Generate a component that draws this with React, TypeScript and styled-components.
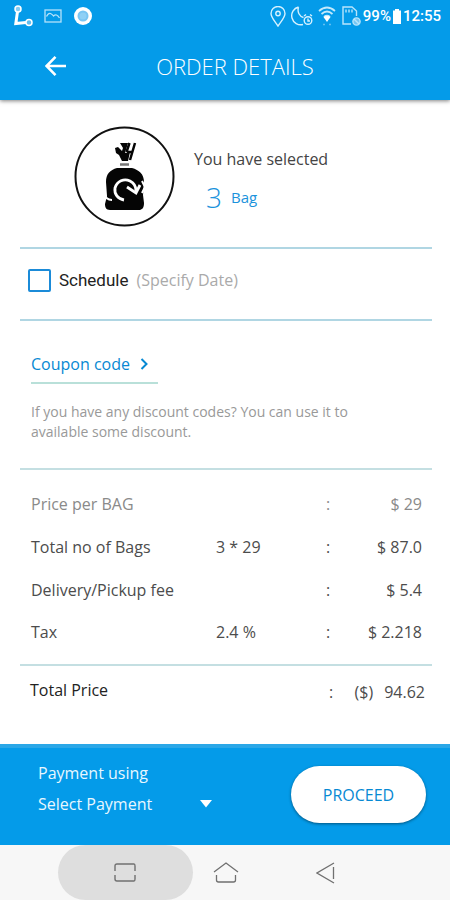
import React from "react";
import styled, { createGlobalStyle } from "styled-components";

const BLUE = "#049be9";
const LINE = "#b0d6e3";

const GlobalStyle = createGlobalStyle`
  *, *::before, *::after { box-sizing: border-box; }
  body {
    margin: 0;
    background: #fff;
    color: #444;
    font-family: "Open Sans", "Noto Sans", sans-serif;
    font-size: 16px;
    line-height: 20px;
  }
  button, input, select { font: inherit; color: inherit; }
`;

const Page = styled.div`
  display: flex;
  flex-direction: column;
  min-height: 100vh;
`;

const Header = styled.header`
  background: ${BLUE};
  color: #fff;
  box-shadow: 0 1px 4px rgba(0, 0, 0, 0.5);
`;

const StatusBar = styled.div`
  display: flex;
  justify-content: space-between;
  align-items: center;
  height: 32px;
  padding: 0 9px 0 12px;
  font-family: Roboto, sans-serif;
  font-size: 15px;
  font-weight: 500;
`;

const StatusGroup = styled.div<{ $gap?: number }>`
  display: flex;
  align-items: center;
  gap: ${(p) => p.$gap ?? 0}px;
`;

const TitleBar = styled.div`
  display: grid;
  grid-template-columns: 68px 1fr 48px;
  align-items: center;
  height: 68px;
`;

const BackButton = styled.button`
  display: flex;
  justify-content: flex-end;
  padding: 0;
  border: 0;
  background: none;
`;

const Title = styled.h1`
  margin: 0;
  text-align: center;
  font-size: 22px;
  line-height: 28px;
  font-weight: 300;
`;

const Main = styled.main`
  flex: 1;
  padding: 0 18px 0 20px;
`;

const Selection = styled.section`
  display: flex;
  align-items: center;
  gap: 19px;
  padding: 26px 0 20px 54px;
`;

const SelectionText = styled.div`
  display: flex;
  flex-direction: column;
  gap: 12px;
  padding-top: 8px;
`;

const Quantity = styled.div`
  display: flex;
  align-items: center;
  gap: 9px;
  padding-left: 12px;
  color: #1b93dc;
  font-size: 15px;
  line-height: 32px;
`;

const Count = styled.span`
  font-size: 28px;
  font-weight: 300;
`;

const Schedule = styled.label`
  display: flex;
  align-items: center;
  height: 72px;
  padding: 0 0 8px 8px;
  border-top: 2px solid ${LINE};
  color: #aaa;
`;

const Checkbox = styled.input`
  appearance: none;
  width: 23px;
  height: 23px;
  margin: 0 8px 0 0;
  border: 2px solid #1b8bd8;
  border-radius: 2px;
  background: #fff;
  &:checked { background: #1b8bd8; }
`;

const ScheduleName = styled.span`
  margin-right: 8px;
  color: #222;
  font-family: Roboto, sans-serif;
  font-size: 17px;
`;

const Coupon = styled.section`
  padding: 33px 11px 26px;
  border-top: 2px solid ${LINE};
`;

const CouponLink = styled.a`
  display: inline-flex;
  align-items: center;
  gap: 10px;
  width: 127px;
  padding-bottom: 8px;
  border-bottom: 2px solid #b9e0d9;
  color: #0789d3;
  text-decoration: none;
  white-space: nowrap;
`;

const CouponHint = styled.p`
  max-width: 340px;
  margin: 18px 0 0;
  color: #999;
  font-size: 14px;
`;

const PriceTable = styled.table`
  width: 100%;
  border-collapse: collapse;
  border-top: 2px solid #c4dfe2;
  table-layout: fixed;
`;

const PriceRow = styled.tr<{ $muted?: boolean }>`
  color: ${(p) => (p.$muted ? "#8a8a8a" : "#4c4c4c")};
  th, td {
    height: 43px;
    padding: 0;
    text-align: left;
    font-weight: 400;
    white-space: nowrap;
  }
  th { padding-left: 11px; }
  td:last-child { padding-right: 10px; text-align: right; }
`;

const PriceBody = styled.tbody`
  tr:first-child > * { height: 56px; padding-top: 13px; }
  tr:last-child > * { height: 54px; padding-bottom: 11px; }
`;

const TotalRow = styled(PriceRow)`
  border-top: 2px solid #c4dfe2;
  th { height: 48px; padding-left: 10px; color: #222; }
  td { height: 48px; padding-top: 4px; }
  td:nth-child(3) { padding-left: 3px; }
  td:last-child { padding-right: 7px; }
`;

const Amount = styled.span`
  margin-left: 11px;
`;

const Payment = styled.footer`
  display: flex;
  justify-content: space-between;
  align-items: center;
  height: 101px;
  padding: 0 24px 0 38px;
  border-top: 4px solid #2ba7e7;
  background: ${BLUE};
  color: #e8f7ff;
`;

const PaymentField = styled.label`
  display: flex;
  flex-direction: column;
  gap: 9px;
  padding-bottom: 14px;
`;

const SelectBox = styled.span`
  display: grid;
  align-items: center;
  width: 175px;
  select, svg { grid-area: 1 / 1; }
  svg { justify-self: end; pointer-events: none; }
`;

const Select = styled.select`
  appearance: none;
  width: 100%;
  height: 24px;
  padding: 0;
  border: 0;
  background: transparent;
  option { color: #333; }
`;

const Proceed = styled.button`
  width: 135px;
  height: 57px;
  margin-bottom: 4px;
  padding: 0;
  border: 0;
  border-radius: 29px;
  background: #fff;
  box-shadow: 0 1px 3px rgba(0, 0, 0, 0.45);
  color: #0789d3;
`;

const NavBar = styled.nav`
  display: grid;
  grid-template-columns: 135px 66px 134px;
  justify-content: center;
  justify-items: center;
  height: 55px;
  background: #f7f7f7;
`;

const NavButton = styled.button<{ $pressed?: boolean }>`
  display: flex;
  align-items: center;
  justify-content: center;
  width: ${(p) => (p.$pressed ? 135 : 66)}px;
  padding: 0;
  border: 0;
  border-radius: 28px;
  background: ${(p) => (p.$pressed ? "#dedede" : "transparent")};
`;

function RouteIcon() {
  return (
    <svg width="21" height="22" viewBox="0 0 21 22" fill="none" stroke="#fff" aria-hidden="true">
      <path d="M5.5 6.5 3.8 18.5 14 17.5" strokeWidth="3" />
      <circle cx="6" cy="4" r="3" fill="#84cdf4" strokeWidth="1.5" />
      <circle cx="17" cy="17.5" r="3" fill="#60bdef" strokeWidth="1.5" />
    </svg>
  );
}

function PictureIcon() {
  return (
    <svg width="18" height="14" viewBox="0 0 18 14" fill="none" stroke="#b5e2fa" strokeWidth="1.3" aria-hidden="true">
      <rect x="1" y="1" width="16" height="12" />
      <path d="M2.5 7.5q2-4 4-3t3 2.5q3-3 6 2" />
    </svg>
  );
}

function RecordIcon() {
  return (
    <svg width="20" height="20" viewBox="0 0 20 20" aria-hidden="true">
      <circle cx="10" cy="10" r="9" fill="#fff" />
      <circle cx="10" cy="10" r="5.5" fill="#79c5f2" />
      <circle cx="10" cy="10" r="3.5" fill="#8fd0f5" />
    </svg>
  );
}

function PinIcon() {
  return (
    <svg width="16" height="21" viewBox="0 0 16 21" fill="none" stroke="#d5f1ff" strokeWidth="1.4" aria-hidden="true">
      <path d="M8 20C5 15.5 1 11.5 1 7.5a7 7 0 0 1 14 0c0 4-4 8-7 12.5Z" />
      <circle cx="8" cy="7.5" r="2.2" />
    </svg>
  );
}

function MoonIcon() {
  return (
    <svg width="22" height="20" viewBox="0 0 22 20" fill="none" stroke="#d5f1ff" strokeWidth="1.4" aria-hidden="true">
      <path d="M7.5 1A9 9 0 1 0 12 18.5M7.5 1c-1.5 5 1 9.5 5 10.5" />
      <circle cx="17" cy="14.5" r="3.8" />
      <path d="M17 12.5v2.5h2M13 10l2-1.5M21 10l-2-1.5" />
    </svg>
  );
}

function WifiIcon() {
  return (
    <svg width="18" height="20" viewBox="0 0 18 20" fill="none" stroke="#c4e9fb" strokeWidth="1.7" aria-hidden="true">
      <path d="M1 5q8-7 16 0M3.5 8q5.5-5 11 0M6 11q3-2.5 6 0" />
      <path d="m5.5 11 3.5 5 3.5-5q-3.5-2-7 0Z" fill="#fff" stroke="none" />
      <path d="M5 18.5h2M11 18.5h2" stroke="#62bff1" />
    </svg>
  );
}

function SimIcon() {
  return (
    <svg width="22" height="20" viewBox="0 0 22 20" fill="none" stroke="#b9e5fb" strokeWidth="1.4" aria-hidden="true">
      <path d="M10 18H2V1h9l4.5 4v5" />
      <path d="M5 3.5v3M8 3.5v3M11 3.5v3" />
      <circle cx="15.5" cy="15.5" r="3.6" fill="#75c5f2" />
      <path d="m13 13 5 5" />
    </svg>
  );
}

function BatteryIcon() {
  return (
    <svg width="12" height="15" viewBox="0 0 12 15" fill="#fff" aria-hidden="true">
      <path d="M4 0h4v1.5h2V15H2V1.5h2Z" />
    </svg>
  );
}

function BackArrow() {
  return (
    <svg width="23" height="22" viewBox="0 0 23 22" fill="none" stroke="#fff" strokeWidth="2.6" aria-hidden="true">
      <path d="M21 11H2M10.5 1.8 1.5 11l9 9.2" />
    </svg>
  );
}

function BagIcon() {
  return (
    <svg width="101" height="101" viewBox="0 0 101 101" fill="none" role="img" aria-label="Bag">
      <circle cx="50.5" cy="50.5" r="49" stroke="#111" strokeWidth="2" />
      <path d="M46 17h8l-3 10 5-1-2 9h-6l-3-6-3-2-1-5 3-1 4 4 1-3Z" fill="#050505" />
      <path d="M61 17 56 34M53 26h5M55.5 17l-3 9" stroke="#050505" strokeWidth="2.5" />
      <path d="M46 38.5h9" stroke="#777" strokeWidth="2.5" />
      <path d="M43 42h15c7 2 12 6 12 14l-1 13 1 8c0 5-2 7-5 7H36c-4 0-5-3-5-6l2-8-1-14c0-8 4-12 11-14Z" fill="#050505" />
      <path d="M50 74c-6-1-10-6-9-12 2-7 9-10 15-7 4 2 6 5 6 10" stroke="#fff" strokeWidth="2.8" />
      <path d="m53 61 9 6 4-8" stroke="#fff" strokeWidth="2.8" />
      <path d="m68 55 3 6-3 6" stroke="#fff" strokeWidth="2" />
      <path d="M30 67c1 4 4 7 8 7" stroke="#fff" strokeWidth="2" />
    </svg>
  );
}

function ChevronIcon() {
  return (
    <svg width="9" height="14" viewBox="0 0 9 14" fill="none" stroke="#0789d3" strokeWidth="2" aria-hidden="true">
      <path d="m1.5 2 5 5-5 5" />
    </svg>
  );
}

function CaretIcon() {
  return (
    <svg width="14" height="8" viewBox="0 0 14 8" fill="#fff" aria-hidden="true">
      <path d="M1 0h12L7 7.5Z" />
    </svg>
  );
}

function RecentsIcon() {
  return (
    <svg width="24" height="20" viewBox="0 0 24 20" fill="none" stroke="#707070" strokeWidth="1.4" aria-hidden="true">
      <path d="M2 8V3q0-2 2-2h17q1 0 1 2v5M2 12v4q0 2 2 2h17q1 0 1-2v-4" />
    </svg>
  );
}

function HomeIcon() {
  return (
    <svg width="26" height="22" viewBox="0 0 26 22" fill="none" stroke="#707070" strokeWidth="1.3" aria-hidden="true">
      <path d="M1 10 13 1l12 9M3.5 13v5q0 2 2 2h15q2 0 2-2v-5" />
    </svg>
  );
}

function NavBackIcon() {
  return (
    <svg width="20" height="22" viewBox="0 0 20 22" fill="none" stroke="#707070" strokeWidth="1.3" aria-hidden="true">
      <path d="M18 1 1 11l17 10M17.5 5v12" />
    </svg>
  );
}

const prices = [
  { label: "Price per BAG", detail: "", amount: "$ 29", muted: true },
  { label: "Total no of Bags", detail: "3 * 29", amount: "$ 87.0" },
  { label: "Delivery/Pickup fee", detail: "", amount: "$ 5.4" },
  { label: "Tax", detail: "2.4 %", amount: "$ 2.218" },
];

export default function App() {
  return (
    <Page>
      <GlobalStyle />
      <Header>
        <StatusBar>
          <StatusGroup $gap={11}>
            <RouteIcon />
            <PictureIcon />
            <RecordIcon />
          </StatusGroup>
          <StatusGroup $gap={5}>
            <PinIcon />
            <MoonIcon />
            <WifiIcon />
            <StatusGroup>
              <SimIcon />
              <span>99%</span>
              <BatteryIcon />
              <span>12:55</span>
            </StatusGroup>
          </StatusGroup>
        </StatusBar>
        <TitleBar>
          <BackButton type="button" aria-label="Back">
            <BackArrow />
          </BackButton>
          <Title>ORDER DETAILS</Title>
        </TitleBar>
      </Header>

      <Main>
        <Selection>
          <BagIcon />
          <SelectionText>
            <span>You have selected</span>
            <Quantity>
              <Count>3</Count>
              <span>Bag</span>
            </Quantity>
          </SelectionText>
        </Selection>

        <Schedule>
          <Checkbox type="checkbox" />
          <ScheduleName>Schedule</ScheduleName>
          <span>(Specify Date)</span>
        </Schedule>

        <Coupon>
          <CouponLink href="#coupon">
            Coupon code
            <ChevronIcon />
          </CouponLink>
          <CouponHint>
            If you have any discount codes? You can use it to available some discount.
          </CouponHint>
        </Coupon>

        <PriceTable>
          <colgroup>
            <col />
            <col width="110" />
            <col width="20" />
            <col width="86" />
          </colgroup>
          <PriceBody>
            {prices.map((row) => (
              <PriceRow key={row.label} $muted={row.muted}>
                <th scope="row">{row.label}</th>
                <td>{row.detail}</td>
                <td>:</td>
                <td>{row.amount}</td>
              </PriceRow>
            ))}
          </PriceBody>
          <tfoot>
            <TotalRow>
              <th scope="row">Total Price</th>
              <td />
              <td>:</td>
              <td>
                ($)<Amount>94.62</Amount>
              </td>
            </TotalRow>
          </tfoot>
        </PriceTable>
      </Main>

      <Payment>
        <PaymentField>
          Payment using
          <SelectBox>
            <Select defaultValue="">
              <option value="">Select Payment</option>
            </Select>
            <CaretIcon />
          </SelectBox>
        </PaymentField>
        <Proceed type="button">PROCEED</Proceed>
      </Payment>

      <NavBar>
        <NavButton type="button" $pressed aria-label="Recent apps">
          <RecentsIcon />
        </NavButton>
        <NavButton type="button" aria-label="Home">
          <HomeIcon />
        </NavButton>
        <NavButton type="button" aria-label="Back">
          <NavBackIcon />
        </NavButton>
      </NavBar>
    </Page>
  );
}
